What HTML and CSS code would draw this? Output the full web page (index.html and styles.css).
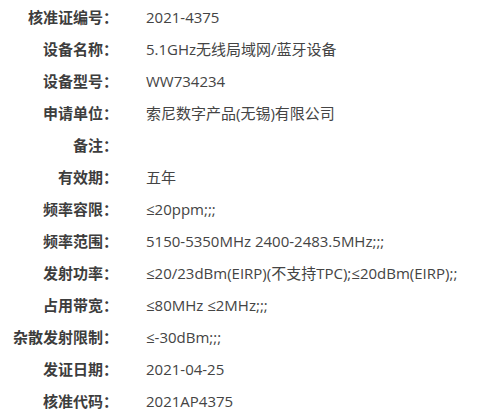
FILE: index.html
```html
<!DOCTYPE html>
<html lang="zh-CN">
<head>
    <meta charset="UTF-8">
    <meta name="viewport" content="width=device-width, initial-scale=1.0">
    <title>核准证信息</title>
    <link rel="stylesheet" href="styles.css">
</head>
<body>
    <div class="info">
        <div class="row"><div class="label">核准证编号：</div><div class="value">2021-4375</div></div>
        <div class="row"><div class="label">设备名称：</div><div class="value">5.1GHz无线局域网/蓝牙设备</div></div>
        <div class="row"><div class="label">设备型号：</div><div class="value">WW734234</div></div>
        <div class="row"><div class="label">申请单位：</div><div class="value">索尼数字产品(无锡)有限公司</div></div>
        <div class="row"><div class="label">备注：</div><div class="value"></div></div>
        <div class="row"><div class="label">有效期：</div><div class="value">五年</div></div>
        <div class="row"><div class="label">频率容限：</div><div class="value">≤20ppm;;;</div></div>
        <div class="row"><div class="label">频率范围：</div><div class="value">5150-5350MHz 2400-2483.5MHz;;;</div></div>
        <div class="row"><div class="label">发射功率：</div><div class="value">≤20/23dBm(EIRP)(不支持TPC);≤20dBm(EIRP);;</div></div>
        <div class="row"><div class="label">占用带宽：</div><div class="value">≤80MHz ≤2MHz;;;</div></div>
        <div class="row"><div class="label">杂散发射限制：</div><div class="value">≤-30dBm;;;</div></div>
        <div class="row"><div class="label">发证日期：</div><div class="value">2021-04-25</div></div>
        <div class="row"><div class="label">核准代码：</div><div class="value">2021AP4375</div></div>
    </div>
</body>
</html>
```

FILE: styles.css
```css
body {
    margin: 0;
    background-color: #fff;
    font-family: "Noto Sans CJK SC", "Noto Sans", sans-serif;
    font-size: 15px;
}

.info {
    padding-top: 1px;
}

.row {
    display: grid;
    grid-template-columns: 118px 1fr;
    column-gap: 28px;
    line-height: 32px;
    height: 32px;
    white-space: nowrap;
}

.label {
    text-align: right;
    font-weight: bold;
    color: #3d3d3d;
}

.value {
    font-family: "Open Sans", "Noto Sans CJK SC", sans-serif;
    color: #444;
}
```
